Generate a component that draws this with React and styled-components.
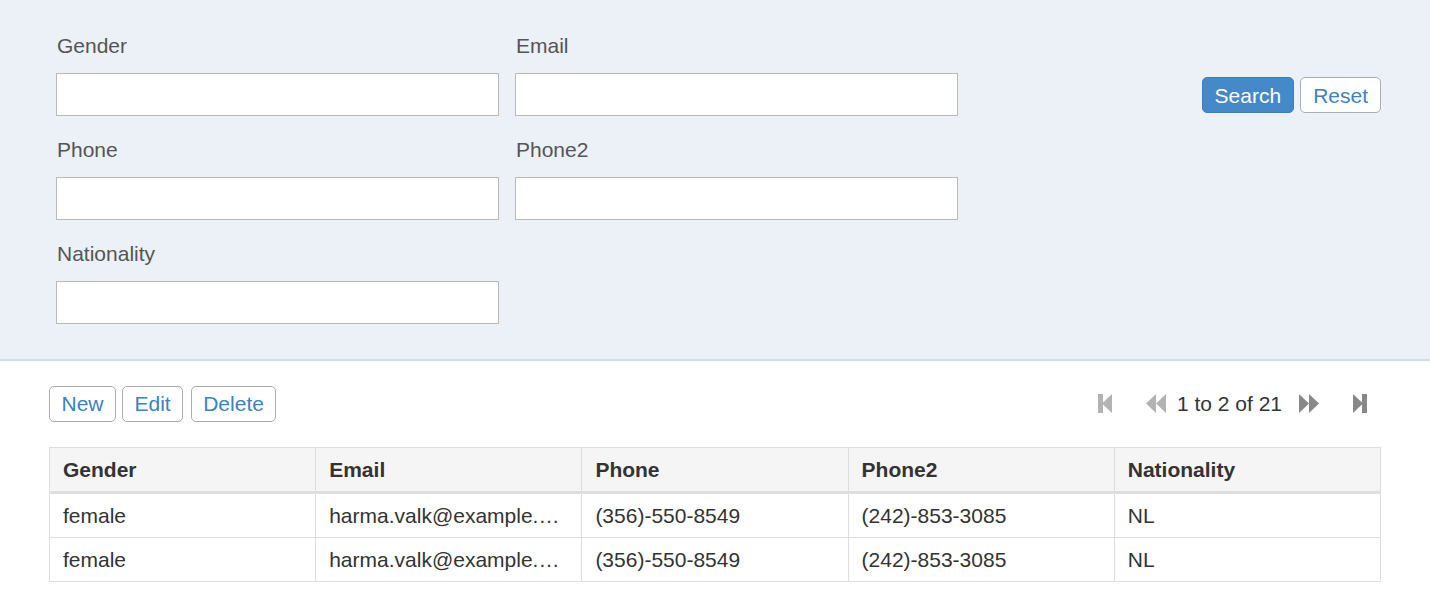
import React from 'react';
import styled, { createGlobalStyle } from 'styled-components';

const GlobalStyle = createGlobalStyle`
  html, body {
    margin: 0;
    padding: 0;
    background: #fff;
  }

  body {
    font-family: 'Liberation Sans', Arial, Helvetica, sans-serif;
    font-size: 21px;
    color: #333;
  }

  * {
    box-sizing: border-box;
  }
`;

const StyledSearchPanel = styled.section`
  display: flex;
  justify-content: space-between;
  align-items: flex-start;
  height: 361px;
  padding: 31px 49px 0 56px;
  background: #ecf0f7;
  border-bottom: 2px solid #d0dfee;
`;

const StyledFields = styled.div`
  display: grid;
  grid-template-columns: repeat(2, 443px);
  column-gap: 16px;
  row-gap: 19px;
`;

const StyledField = styled.div`
  display: flex;
  flex-direction: column;

  label {
    height: 30px;
    line-height: 30px;
    margin: 0 0 12px 1px;
    color: #555;
  }

  input {
    width: 443px;
    height: 43px;
    border: 1px solid #b9b9b9;
    background: #fff;
    font: inherit;
    padding: 0 10px;
  }
`;

const StyledSearchActions = styled.div`
  display: flex;
  gap: 6px;
  margin-top: 46px;
`;

const Button = styled.button`
  height: ${({ $height }) => $height || 36}px;
  padding: 0 ${({ $pad }) => $pad || 11}px;
  font-family: inherit;
  font-size: 21px;
  line-height: 1;
  border-radius: 5px;
  cursor: pointer;
  border: 1px solid ${({ $primary }) => ($primary ? '#3f7fbf' : '#adadad')};
  background: ${({ $primary }) => ($primary ? '#4589c8' : '#fff')};
  color: ${({ $primary }) => ($primary ? '#fff' : '#3c81c3')};
`;

const StyledResults = styled.section`
  padding: 24px 49px 0;
`;

const StyledToolbar = styled.div`
  display: flex;
  justify-content: space-between;
  align-items: center;
  height: 37px;
  margin-bottom: 25px;
`;

const StyledActions = styled.div`
  display: flex;
  gap: 6px;

  button + button + button {
    margin-left: 2px;
  }
`;

const StyledPager = styled.div`
  display: flex;
  align-items: center;
  padding-right: 14px;
  color: #333;
`;

const PagerIcon = styled.svg`
  display: block;
  fill: ${({ $disabled }) => ($disabled ? '#b3b3b3' : '#888')};
  margin: ${({ $margin }) => $margin};
`;

const StyledTable = styled.table`
  width: 100%;
  table-layout: fixed;
  border-collapse: collapse;
  border: 1px solid #dedede;

  th,
  td {
    padding: 1px 13px 0;
    text-align: left;
    border: 1px solid #dedede;
    white-space: nowrap;
    overflow: hidden;
    text-overflow: ellipsis;
  }

  th {
    height: 45px;
    background: #f5f5f5;
    font-weight: bold;
    border-bottom: 3px solid #dedede;
  }

  td {
    height: 44.5px;
    padding-top: 2px;
  }
`;

const fields = ['Gender', 'Email', 'Phone', 'Phone2', 'Nationality'];

const rows = [
  ['female', 'harma.valk@example.com', '(356)-550-8549', '(242)-853-3085', 'NL'],
  ['female', 'harma.valk@example.com', '(356)-550-8549', '(242)-853-3085', 'NL'],
];

const App = () => (
  <>
    <GlobalStyle />
    <StyledSearchPanel>
      <StyledFields>
        {fields.map((field) => (
          <StyledField key={field}>
            <label htmlFor={field}>{field}</label>
            <input id={field} type="text" />
          </StyledField>
        ))}
      </StyledFields>

      <StyledSearchActions>
        <Button $primary $pad={12}>Search</Button>
        <Button $pad={12}>Reset</Button>
      </StyledSearchActions>
    </StyledSearchPanel>

    <StyledResults>
      <StyledToolbar>
        <StyledActions>
          <Button $height={36} $pad={11.5}>New</Button>
          <Button $height={36} $pad={11.5}>Edit</Button>
          <Button $height={36} $pad={11}>Delete</Button>
        </StyledActions>

        <StyledPager>
          <PagerIcon $disabled width="14" height="19" viewBox="0 0 14 19" $margin="0 34px 0 0">
            <rect x="0" y="0" width="5" height="19" />
            <polygon points="14,0 4,9.5 14,19" />
          </PagerIcon>
          <PagerIcon $disabled width="20" height="19" viewBox="0 0 20 19" $margin="0 11px 0 0">
            <polygon points="10,0 0,9.5 10,19" />
            <polygon points="20,0 10,9.5 20,19" />
          </PagerIcon>
          <span>1 to 2 of 21</span>
          <PagerIcon width="20" height="19" viewBox="0 0 20 19" $margin="0 34px 0 17px">
            <polygon points="0,0 10,9.5 0,19" />
            <polygon points="10,0 20,9.5 10,19" />
          </PagerIcon>
          <PagerIcon width="14" height="19" viewBox="0 0 14 19">
            <polygon points="0,0 10,9.5 0,19" />
            <rect x="9" y="0" width="5" height="19" />
          </PagerIcon>
        </StyledPager>
      </StyledToolbar>

      <StyledTable>
        <thead>
          <tr>
            {fields.map((field) => (
              <th key={field}>{field}</th>
            ))}
          </tr>
        </thead>
        <tbody>
          {rows.map((row, i) => (
            <tr key={i}>
              {row.map((cell, j) => (
                <td key={j}>{cell}</td>
              ))}
            </tr>
          ))}
        </tbody>
      </StyledTable>
    </StyledResults>
  </>
);

export default App;
